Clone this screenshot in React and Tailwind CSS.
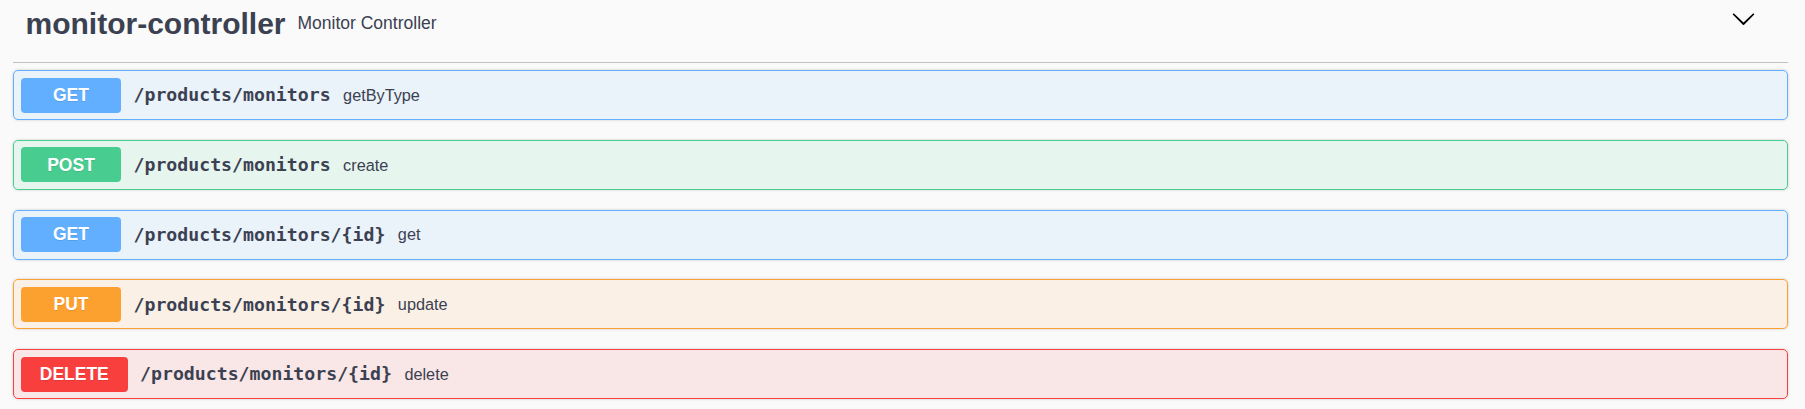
import React from 'react';

const ops = [
  { method: 'GET', path: '/products/monitors', desc: 'getByType', color: 'get' },
  { method: 'POST', path: '/products/monitors', desc: 'create', color: 'post' },
  { method: 'GET', path: '/products/monitors/{id}', desc: 'get', color: 'get' },
  { method: 'PUT', path: '/products/monitors/{id}', desc: 'update', color: 'put' },
  { method: 'DELETE', path: '/products/monitors/{id}', desc: 'delete', color: 'delete' },
];

const styles = {
  get: { box: 'border-[#61affe] bg-[#61affe]/10', badge: 'bg-[#61affe]' },
  post: { box: 'border-[#49cc90] bg-[#49cc90]/10', badge: 'bg-[#49cc90]' },
  put: { box: 'border-[#fca130] bg-[#fca130]/10', badge: 'bg-[#fca130]' },
  delete: { box: 'border-[#f93e3e] bg-[#f93e3e]/10', badge: 'bg-[#f93e3e]' },
};

const Chevron = () => (
  <svg width="25" height="25" viewBox="0 0 20 20" fill="#000">
    <path d="M17.418 6.109c.272-.268.709-.268.979 0s.271.701 0 .969l-7.908 7.83c-.27.268-.707.268-.979 0l-7.908-7.83c-.27-.268-.27-.701 0-.969.271-.268.709-.268.979 0L10 13.25l7.418-7.141z" />
  </svg>
);

const OpBlock = ({ op }) => {
  const s = styles[op.color];
  return (
    <div className={`flex items-center h-[50px] px-[7px] border rounded-[5px] shadow-[0_0_3px_rgba(0,0,0,0.19)] ${s.box}`}>
      <span
        className={`h-[35px] min-w-[100px] px-[18.75px] flex items-center justify-center rounded-[4px] text-white font-bold text-[17.5px] [text-shadow:0_1px_0_rgba(0,0,0,0.1)] ${s.badge}`}
      >
        {op.method}
      </span>
      <span className="pl-[12.5px] pr-[12.5px] font-['DejaVu_Sans_Mono',monospace] font-bold text-[18.2px] text-[#3b4151]">
        {op.path}
      </span>
      <span className="text-[16.25px] text-[#3b4151]">{op.desc}</span>
    </div>
  );
};

export default function App() {
  return (
    <div className="min-h-screen bg-[#fafafa] pl-[13px] pr-[17px] font-['Liberation_Sans',Arial,sans-serif]">
      {/* Tag header */}
      <div className="pb-[16px] border-b border-[#3b4151]/30">
        <div className="h-[46px] flex items-center">
          <h3 className="pl-[12.5px] text-[30px] font-bold text-[#3b4151]">monitor-controller</h3>
          <span className="ml-[12px] text-[17.5px] text-[#3b4151]">Monitor Controller</span>
          <div className="ml-auto pr-[32px] self-start pt-[6px] flex">
            <Chevron />
          </div>
        </div>
      </div>

      {/* Operations */}
      <div className="mt-[7px] flex flex-col gap-[19.75px]">
        {ops.map((op, i) => (
          <OpBlock key={i} op={op} />
        ))}
      </div>
    </div>
  );
}
